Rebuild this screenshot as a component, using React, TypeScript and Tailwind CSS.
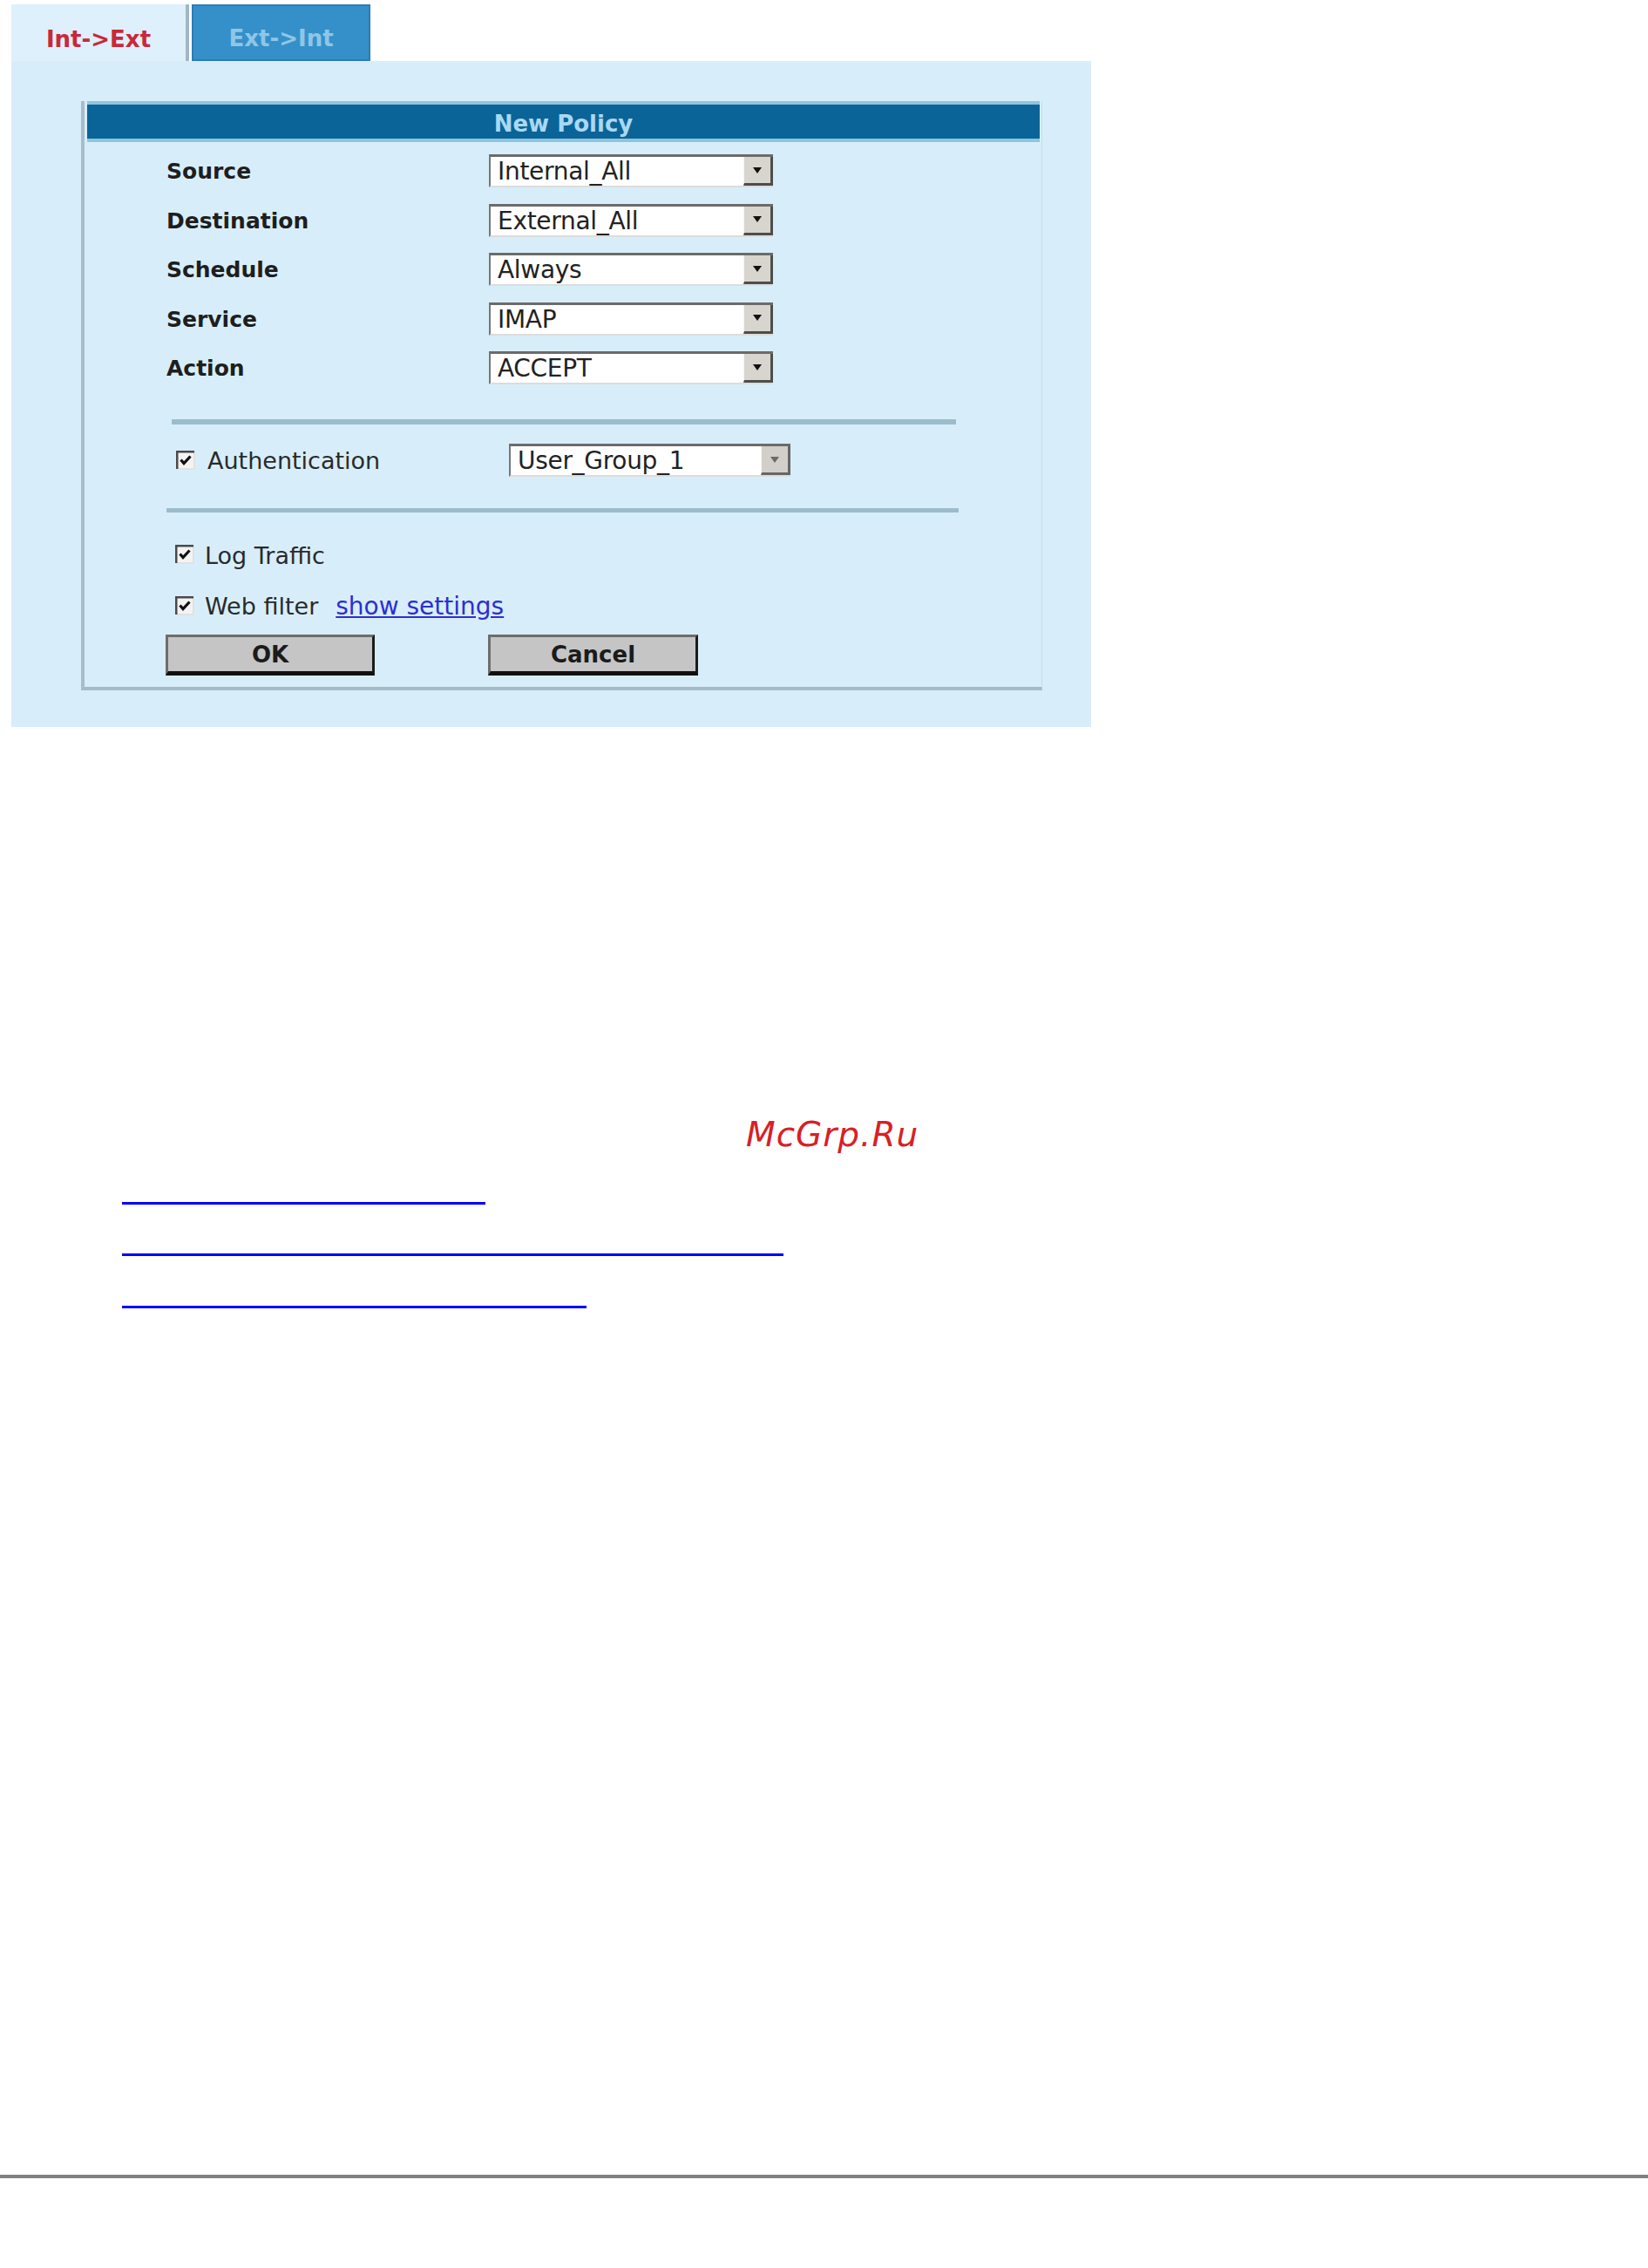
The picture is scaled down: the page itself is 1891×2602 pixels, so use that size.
import React from "react";

const rows = [
  { label: "Source", value: "Internal_All" },
  { label: "Destination", value: "External_All" },
  { label: "Schedule", value: "Always" },
  { label: "Service", value: "IMAP" },
  { label: "Action", value: "ACCEPT" },
];

function Check() {
  return (
    <svg width="22" height="22" viewBox="0 0 22 22" className="shrink-0">
      <rect x="1" y="1" width="20" height="20" fill="#f3f3f3" />
      <path d="M21 1v20H1" stroke="#e2e2e2" strokeWidth="2" fill="none" />
      <path d="M1 21V1h20" stroke="#4a4a4a" strokeWidth="3" fill="none" />
      <path d="M5.5 10.5l3.5 4 7.5-8" stroke="#111" strokeWidth="3.2" fill="none" />
    </svg>
  );
}

function Select({ value, width, dim }: { value: string; width: string; dim?: boolean }) {
  return (
    <div
      className={`flex h-[38px] ${width} border-b-[2px] border-l-[2px] border-t-[3px] border-b-[#dcdcdc] border-l-[#777] border-t-[#6b6b6b] bg-white`}
    >
      <span className="flex-1 pl-[8px] text-[28px] leading-[33px] tracking-[-0.3px] text-[#222]">{value}</span>
      <span
        className={`flex w-[34px] items-center justify-center border-b-[3px] border-r-[3px] border-l border-l-[#f4f4f4] ${
          dim ? "border-b-[#666] border-r-[#666] bg-[#d2cfca]" : "border-b-[#4d4d4d] border-r-[#4d4d4d] bg-[#d8d5ce]"
        }`}
      >
        <svg width="10" height="7" viewBox="0 0 10 7">
          <path d="M0 0h10L5 7z" fill={dim ? "#6a6a6a" : "#111"} />
        </svg>
      </span>
    </div>
  );
}

function Button({ children, width }: { children: React.ReactNode; width: string }) {
  return (
    <button
      type="button"
      className={`h-[47px] ${width} border-b-[5px] border-l-[3px] border-r-[3px] border-t-[3px] border-b-[#111] border-l-[#6d6d6d] border-r-[#1c1c1c] border-t-[#6d6d6d] bg-[#c5c5c5] text-[26px] font-bold leading-none text-[#1b1b1b]`}
    >
      {children}
    </button>
  );
}

export default function App() {
  return (
    <div className="h-[2602px] w-[1891px] overflow-hidden bg-white font-['DejaVu_Sans',sans-serif]">
      {/* tabs */}
      <div className="flex h-[70px] pl-[13px] pt-[5px]">
        <div className="flex w-[204px] items-center justify-center border-r-[4px] border-[#a3b6c4] bg-[#def0fb] pt-[16px] text-[26px] font-bold text-[#c9283c]">
          Int-&gt;Ext
        </div>
        <div className="ml-[3px] flex w-[205px] items-center justify-center border-[2px] border-[#2c7db1] bg-[#3590c9] pt-[14px] text-[26px] font-bold text-[#8fc6e6]">
          Ext-&gt;Int
        </div>
      </div>

      {/* panel */}
      <div className="ml-[13px] h-[764px] w-[1239px] bg-[#d7eefa] pl-[80px] pt-[46px]">
        <div className="flex h-[676px] w-[1103px] flex-col border-b-[4px] border-l-[4px] border-r border-b-[#a6bac6] border-l-[#a8bdca] border-r-[#c4dbe8]">
          <div className="ml-[3px] mr-[2px] flex h-[47px] items-center justify-center border-y-[4px] border-[#8fc4df] bg-[#0b6497] pt-[6px] text-[26px] font-bold text-[#a9d8f3]">
            New Policy
          </div>

          <div className="mt-[14px] flex flex-col gap-[18.5px] pl-[94px]">
            {rows.map((r) => (
              <div key={r.label} className="flex h-[38px] items-center">
                <span className="w-[370px] pt-[2px] text-[25px] font-bold text-[#1e1e1e]">{r.label}</span>
                <Select value={r.value} width="w-[326px]" />
              </div>
            ))}
          </div>

          <div className="ml-[100px] mt-[40px] h-[6px] w-[900px] bg-[#9dbccb]" />

          <div className="mt-[22px] flex h-[38px] items-center pl-[105px]">
            <div className="flex w-[382px] items-center">
              <Check />
              <span className="ml-[14px] pt-[2px] text-[27px] text-[#2a2a2a]">Authentication</span>
            </div>
            <Select value="User_Group_1" width="w-[323px]" dim />
          </div>

          <div className="ml-[94px] mt-[36px] h-[5px] w-[909px] bg-[#9dbccb]" />

          <div className="mt-[33px] flex h-[30px] items-center pl-[104px]">
            <Check />
            <span className="ml-[12px] pt-[4px] text-[27px] text-[#2a2a2a]">Log Traffic</span>
          </div>

          <div className="mt-[29px] flex h-[30px] items-center pl-[104px]">
            <Check />
            <span className="ml-[12px] pt-[2px] text-[27px] text-[#2a2a2a]">Web filter</span>
            <a href="#" className="ml-[20px] pt-[2px] text-[28px] text-[#2e2ed2] underline">
              show settings
            </a>
          </div>

          <div className="mt-[18px] flex pl-[93px]">
            <Button width="w-[240px]">OK</Button>
            <div className="ml-[130px]">
              <Button width="w-[241px]">Cancel</Button>
            </div>
          </div>
        </div>
      </div>

      <div className="mt-[448px] pl-[856px] text-[39px] italic leading-none tracking-[1px] text-[#d72027]">
        McGrp.Ru
      </div>

      <div className="ml-[140px] mt-[58px] h-[3px] w-[417px] bg-[#0000ff]" />
      <div className="ml-[140px] mt-[56px] h-[3px] w-[759px] bg-[#0000ff]" />
      <div className="ml-[140px] mt-[57px] h-[3px] w-[533px] bg-[#0000ff]" />

      <div className="mt-[994px] h-[4px] w-full bg-[#808080]" />
    </div>
  );
}
